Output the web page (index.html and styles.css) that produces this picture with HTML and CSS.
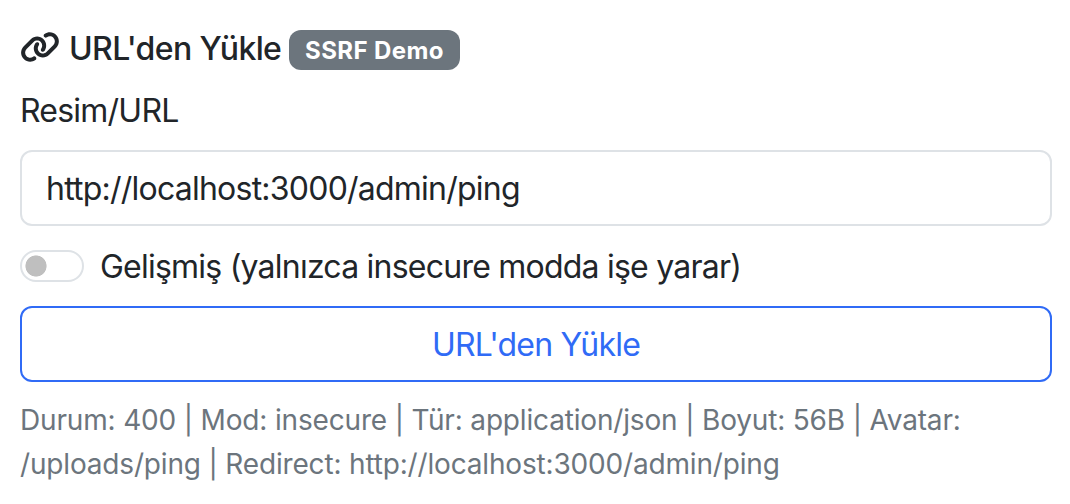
FILE: index.html
```html
<!DOCTYPE html>
<html lang="tr">
<head>
<meta charset="utf-8">
<title>URL'den Yükle</title>
<link rel="stylesheet" href="styles.css">
</head>
<body>
<main class="panel">
  <header class="heading">
    <svg class="link-icon" viewBox="0 0 640 512" fill="currentColor" aria-hidden="true"><path d="M579.8 267.7c56.5-56.5 56.5-148 0-204.5c-50-50-128.8-56.5-186.3-15.4l-1.6 1.1c-14.4 10.3-17.7 30.3-7.4 44.6s30.3 17.7 44.6 7.4l1.6-1.1c32.1-22.9 76-19.3 103.8 8.6c31.5 31.5 31.5 82.5 0 114L422.3 334.8c-31.5 31.5-82.5 31.5-114 0c-27.9-27.9-31.5-71.8-8.6-103.8l1.1-1.6c10.3-14.4 6.9-34.4-7.4-44.6s-34.4-6.9-44.6 7.4l-1.1 1.6C206.5 251.2 213 330 263 380c56.5 56.5 148 56.5 204.5 0L579.8 267.7zM60.2 244.3c-56.5 56.5-56.5 148 0 204.5c50 50 128.8 56.5 186.3 15.4l1.6-1.1c14.4-10.3 17.7-30.3 7.4-44.6s-30.3-17.7-44.6-7.4l-1.6 1.1c-32.1 22.9-76 19.3-103.8-8.6C74 372 74 321 105.5 289.5L217.7 177.2c31.5-31.5 82.5-31.5 114 0c27.9 27.9 31.5 71.8 8.6 103.9l-1.1 1.6c-10.3 14.4-6.9 34.4 7.4 44.6s34.4 6.9 44.6-7.4l1.1-1.6C433.5 260.8 427 182 377 132c-56.5-56.5-148-56.5-204.5 0L60.2 244.3z"/></svg>
    <h1 class="title">URL'den Yükle</h1>
    <span class="badge">SSRF Demo</span>
  </header>
  <form class="form">
    <label class="label" for="url">Resim/URL</label>
    <input class="input" id="url" type="text" value="http://localhost:3000/admin/ping">
    <label class="switch-row"><input class="switch" type="checkbox"><span>Gelişmiş (yalnızca insecure modda işe yarar)</span></label>
    <button class="button" type="button">URL'den Yükle</button>
  </form>
  <p class="status">Durum: 400 | Mod: insecure | Tür: application/json | Boyut: 56B | Avatar:<br>/uploads/ping | Redirect: http://localhost:3000/admin/ping</p>
</main>
</body>
</html>
```
FILE: styles.css
```css
* { box-sizing: border-box; }
body { margin: 0; background: #fff; color: #212529; font-family: Inter, "Liberation Sans", sans-serif; font-size: 32px; line-height: 48px; letter-spacing: -0.77px; }
.panel { padding: 28px 18px 0 20px; }
.heading { display: flex; align-items: flex-start; height: 42px; }
.link-icon { width: 40px; height: 32px; margin: 3px 9px 0 0; }
.title { margin: 0; font-size: 32px; font-weight: 500; width: 220px; line-height: 41px; white-space: nowrap; letter-spacing: -0.63px; }
.badge { width: 171px; height: 40px; margin-top: 2px; border-radius: 12px; background: #6c757d; color: #fff; font-size: 24px; font-weight: 700; line-height: 42px; text-align: center; white-space: nowrap; letter-spacing: 0.4px; }
.form { display: flex; flex-direction: column; }
.label { margin-top: 17px; height: 63px; }
.input { width: 100%; height: 76px; border: 2px solid #dee2e6; border-radius: 12px; padding: 0 24px; background: #fff; color: #212529; font: inherit; letter-spacing: inherit; }
.switch-row { display: flex; align-items: flex-start; height: 48px; margin: 17px 0 15px; white-space: nowrap; }
.switch { appearance: none; flex: none; width: 64px; height: 32px; margin: 7px 16px 0 0; border: 2px solid #dee2e6; border-radius: 16px; background: radial-gradient(circle at 14px 14px, #bfbfbf 10.2px, transparent 10.9px); }
.button { height: 76px; border: 2px solid #306bf6; border-radius: 12px; padding: 2px 0 0; background: #fff; color: #306bf6; font: inherit; letter-spacing: inherit; }
.status { margin: 16px 0 0; color: #6c757d; font-size: 28px; line-height: 44px; white-space: nowrap; letter-spacing: -0.17px; }
```
